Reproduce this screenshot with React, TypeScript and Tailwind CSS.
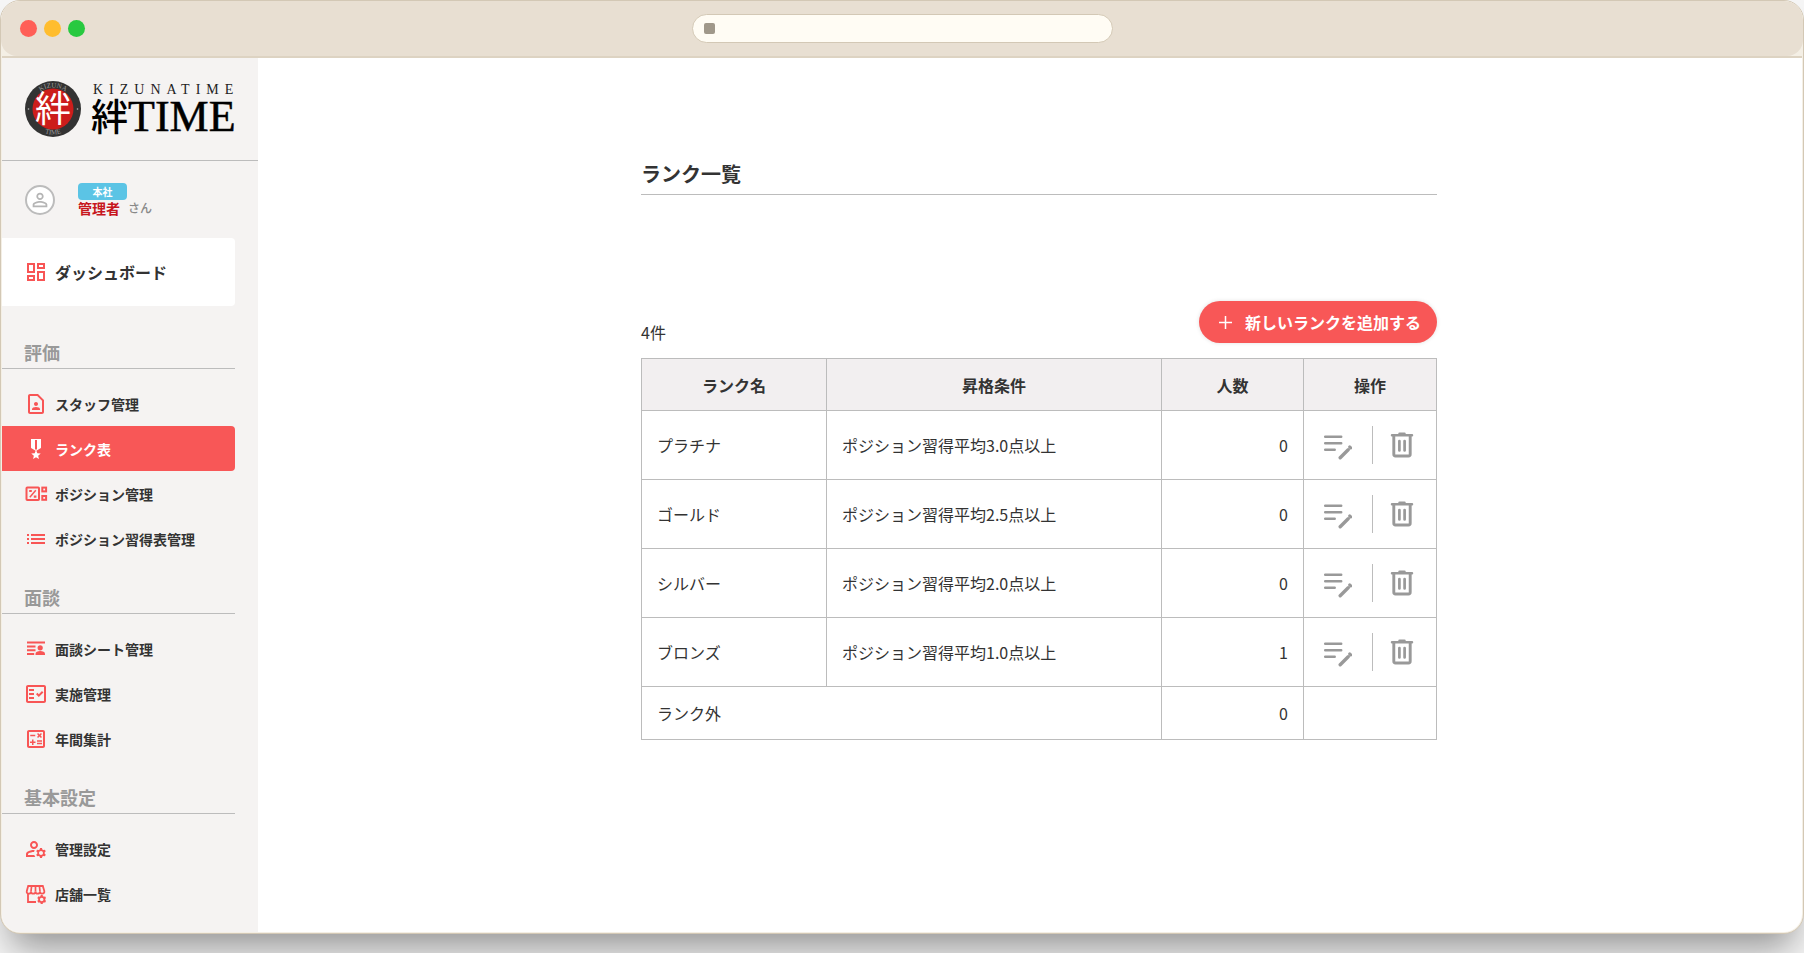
import type { ReactNode } from "react";
import {
  MdList,
  MdMilitaryTech,
  MdOutlineCalculate,
  MdOutlineContactPage,
  MdOutlineDashboard,
  MdOutlineFactCheck,
  MdOutlineManageAccounts,
  MdPersonOutline,
} from "react-icons/md";

type NavItem = { label: string; icon: ReactNode; active?: boolean };
type NavSection = { title: string; items: NavItem[] };
type Rank = { name: string; condition: string; count: number };

function PositionIcon() {
  return (
    <svg width="24" height="24" viewBox="0 0 24 24" fill="none" stroke="currentColor" strokeWidth="2">
      <rect x="2.5" y="5.5" width="12.5" height="12.5" rx="0.8" />
      <rect x="18.3" y="5.6" width="3.8" height="3.8" />
      <rect x="18.3" y="14" width="3.8" height="3.8" />
      <path d="M5.8 15.300l6-7" strokeWidth="1.5" />
      <path d="M5.2 9h2.600M9.800 14.600h2.600" strokeWidth="2.200" />
    </svg>
  );
}

function SheetIcon() {
  return (
    <svg width="24" height="24" viewBox="0 0 24 24" fill="currentColor">
      <path d="M3 4.500h18v2H3zM3 8.500h8.500v2H3zM3 12.300h8.500v2H3zM3 16h7.200v2H3z" />
      <circle cx="16.200" cy="10.800" r="2.600" />
      <path d="M11.500 18v-1.200c0-1.700 2.200-2.700 4.700-2.700s4.800 1 4.800 2.700V18z" />
    </svg>
  );
}

function StoreIcon() {
  return (
    <svg width="24" height="24" viewBox="0 0 24 24" fill="none" stroke="currentColor" strokeWidth="1.8">
      <path d="M4.200 4h14.600l1.500 5c.4 1.500-.6 2.700-2 2.700-1.300 0-2.300-1-2.300-2.200 0 1.300-1 2.200-2.300 2.200s-2.200-1-2.200-2.200c0 1.300-1 2.200-2.300 2.200S7 10.700 7 9.500c0 1.300-1 2.200-2.200 2.200-1.500 0-2.400-1.200-2-2.700z" />
      <path d="M11.500 4v5.500M7.600 4L7 9.500M15.400 4l.6 5.500" strokeWidth="1.700" />
      <path d="M4 11.500V20h8" />
      <circle cx="17.700" cy="17.500" r="2.700" strokeWidth="1.800" />
      <path
        d="M17.700 13v1.800M17.700 20.200V22M13.800 15.250l1.560.9M20.040 18.850l1.560.9M21.600 15.250l-1.560.9M15.360 18.850l-1.560.9"
        strokeWidth="2.200"
      />
    </svg>
  );
}

function EditIcon() {
  return (
    <svg width="30" height="30" viewBox="-1 -4 30 30" fill="none" stroke="currentColor" strokeLinecap="round">
      <path d="M2.200 2.700h16M2.200 9.200h16M2.200 15.700h9.500" strokeWidth="2.500" />
      <path d="M17.200 23.800l8-8" strokeWidth="3.400" />
      <path d="M26.700 12.900l1 1" strokeWidth="3" />
    </svg>
  );
}

function TrashIcon() {
  return (
    <svg width="24" height="28" viewBox="0 0 24 28" fill="none" stroke="currentColor" strokeLinecap="round">
      <path d="M2 4.200h20M9.500 2.700h5" strokeWidth="2.500" />
      <path d="M3.800 5v18.300c0 1 .7 1.700 1.700 1.700h13c1 0 1.700-.7 1.700-1.700V5" strokeWidth="2.900" />
      <path d="M9.400 10v9.500M14.600 10v9.500" strokeWidth="2.700" />
    </svg>
  );
}

function Logo() {
  return (
    <svg
      width="224"
      height="60"
      viewBox="0 0 224 60"
      role="img"
      aria-label="絆TIME"
      className="font-['Liberation_Serif','Noto_Sans_CJK_JP',serif]"
    >
      <defs>
        <path id="sealTop" d="M8.500 30a21.500 21.500 0 0 1 43 0" />
        <path id="sealBottom" d="M4.500 30a25.500 25.500 0 0 0 51 0" />
      </defs>
      <circle cx="30" cy="30" r="28" fill="#333" />
      <circle cx="30" cy="30" r="20.500" fill="#cc1d1b" />
      <circle cx="5.500" cy="30" r="0.800" fill="#bbb" />
      <circle cx="54.500" cy="30" r="0.800" fill="#bbb" />
      <text fontSize="7" fill="#999" textAnchor="middle">
        <textPath href="#sealTop" startOffset="50%">KIZUNA</textPath>
      </text>
      <text fontSize="7" fill="#999" textAnchor="middle">
        <textPath href="#sealBottom" startOffset="50%">TIME</textPath>
      </text>
      <text x="30" y="43" fontSize="36" fill="#fff" textAnchor="middle">絆</text>
      <text x="70" y="15" fontSize="14" fill="#222" className="tracking-[6px]">KIZUNATIME</text>
      <text x="68" y="52" fontSize="37" fontWeight="500" fill="#000">絆</text>
      <text x="105" y="52" fontSize="44" fill="#000" stroke="#000" strokeWidth="0.5">TIME</text>
    </svg>
  );
}

const sections: NavSection[] = [
  {
    title: "評価",
    items: [
      { label: "スタッフ管理", icon: <MdOutlineContactPage size={24} /> },
      { label: "ランク表", icon: <MdMilitaryTech size={24} />, active: true },
      { label: "ポジション管理", icon: <PositionIcon /> },
      { label: "ポジション習得表管理", icon: <MdList size={24} /> },
    ],
  },
  {
    title: "面談",
    items: [
      { label: "面談シート管理", icon: <SheetIcon /> },
      { label: "実施管理", icon: <MdOutlineFactCheck size={24} /> },
      { label: "年間集計", icon: <MdOutlineCalculate size={24} /> },
    ],
  },
  {
    title: "基本設定",
    items: [
      { label: "管理設定", icon: <MdOutlineManageAccounts size={24} /> },
      { label: "店舗一覧", icon: <StoreIcon /> },
    ],
  },
];

const ranks: Rank[] = [
  { name: "プラチナ", condition: "ポジション習得平均3.0点以上", count: 0 },
  { name: "ゴールド", condition: "ポジション習得平均2.5点以上", count: 0 },
  { name: "シルバー", condition: "ポジション習得平均2.0点以上", count: 0 },
  { name: "ブロンズ", condition: "ポジション習得平均1.0点以上", count: 1 },
];

function TitleBar() {
  return (
    <div className="bg-[#f4efe5]">
      <header className="flex h-[55px] items-center rounded-t-[18px] rounded-b-[16px] bg-[#e8dfd2] px-[19px]">
        <div className="flex flex-1 gap-[7px]">
          <span className="size-[17px] rounded-full bg-[#ff5f57]" />
          <span className="size-[17px] rounded-full bg-[#ffbd2e]" />
          <span className="size-[17px] rounded-full bg-[#28c940]" />
        </div>
        <div className="flex h-[29px] w-[421px] items-center gap-2 rounded-full border border-[#d3c8b5] bg-[#fffcf4] px-[11px]">
          <span className="size-[11px] rounded-[2px] bg-[#a0988a]" />
          <input type="text" aria-label="アドレス" className="min-w-0 flex-1 bg-transparent text-sm outline-none" />
        </div>
        <div className="flex-1" />
      </header>
    </div>
  );
}

function Sidebar() {
  return (
    <aside className="w-64 shrink-0 bg-[#f5f3f2] pb-[15px]">
      <div className="flex h-[103px] items-center border-b border-[#bcbcbc] pl-[21px]">
        <a href="#">
          <Logo />
        </a>
      </div>

      <div className="flex h-[77px] items-center gap-[23px] pl-[23px]">
        <span className="flex size-[30px] items-center justify-center rounded-full border-2 border-[#bcbcbc] bg-white text-[#b5b5b5]">
          <MdPersonOutline size={22} />
        </span>
        <div>
          <span className="flex h-[17px] w-[49px] items-center justify-center rounded bg-[#5bc4e5] text-[10px] font-bold text-white">
            本社
          </span>
          <p className="flex items-center gap-2 text-sm leading-4 font-bold text-[#c7161d]">
            管理者
            <span className="text-xs leading-4 font-medium text-[#888]">さん</span>
          </p>
        </div>
      </div>

      <nav className="pr-[23px]">
        <a
          href="#"
          className="mb-[10px] flex h-[68px] items-center gap-[7px] rounded-r bg-white pl-[22px] text-base font-bold text-[#333]"
        >
          <MdOutlineDashboard size={24} className="text-[#f85555]" />
          ダッシュボード
        </a>
        {sections.map((section) => (
          <section key={section.title}>
            <h2 className="border-b border-[#bcbcbc] pt-[23px] pb-[3px] pl-[22px] text-lg leading-[26px] font-bold text-[#999]">
              {section.title}
            </h2>
            <ul className="pt-3">
              {section.items.map((item) => (
                <li key={item.label}>
                  <a
                    href="#"
                    className={
                      item.active
                        ? "flex h-[45px] items-center gap-[7px] rounded-r bg-[#f85757] pl-[22px] text-sm font-bold text-white"
                        : "flex h-[45px] items-center gap-[7px] pl-[22px] text-sm font-bold text-[#333]"
                    }
                  >
                    <span className={item.active ? "text-white" : "text-[#f85555]"}>{item.icon}</span>
                    {item.label}
                  </a>
                </li>
              ))}
            </ul>
          </section>
        ))}
      </nav>
    </aside>
  );
}

function RankTable() {
  return (
    <table className="w-full table-fixed border-collapse text-base text-[#333] [&_td]:border [&_td]:border-[#bcbcbc] [&_td]:px-[15px] [&_th]:border [&_th]:border-[#bcbcbc]">
      <colgroup>
        <col className="w-[185px]" />
        <col />
        <col className="w-[142px]" />
        <col className="w-[133px]" />
      </colgroup>
      <thead>
        <tr className="h-[52px] bg-[#f2eff0] font-bold">
          <th>ランク名</th>
          <th>昇格条件</th>
          <th>人数</th>
          <th>操作</th>
        </tr>
      </thead>
      <tbody>
        {ranks.map((rank) => (
          <tr key={rank.name} className="h-[69px]">
            <td>{rank.name}</td>
            <td>{rank.condition}</td>
            <td className="text-right">{rank.count}</td>
            <td>
              <div className="-mx-4 flex items-center justify-center pr-1 text-[#999]">
                <button type="button" aria-label={`${rank.name}を編集`} className="mr-5">
                  <EditIcon />
                </button>
                <span className="h-[38px] w-px bg-[#bcbcbc]" />
                <button type="button" aria-label={`${rank.name}を削除`} className="ml-[17px]">
                  <TrashIcon />
                </button>
              </div>
            </td>
          </tr>
        ))}
        <tr className="h-[53px]">
          <td colSpan={2}>ランク外</td>
          <td className="text-right">0</td>
          <td />
        </tr>
      </tbody>
    </table>
  );
}

export default function App() {
  return (
    <div className="flex min-h-screen flex-col overflow-hidden bg-[#f6f6f6] pb-[19px] font-['Noto_Sans_CJK_JP',sans-serif]">
      <div className="flex flex-1 flex-col rounded-[20px] border border-[#d3c8b5] bg-[#f4efe5] shadow-[0_24px_36px_-10px_rgba(0,0,0,0.4)]">
        <div className="overflow-hidden rounded-t-[19px]">
          <TitleBar />
        </div>
        <div className="mx-px mb-px flex flex-1 overflow-hidden rounded-b-[18px] border-t-2 border-[#ddd3c2] bg-white">
          <Sidebar />
          <main className="flex-1 pt-[102px] pl-[18px]">
            <div className="mx-auto w-full max-w-[796px]">
              <h1 className="border-b border-[#bcbcbc] pb-[6px] text-xl leading-7 font-bold text-[#333]">ランク一覧</h1>
              <div className="mt-[106px] mb-[15px] flex items-end justify-between">
                <p className="text-base leading-[22px] text-[#333]">4件</p>
                <button
                  type="button"
                  className="flex h-[42px] items-center gap-[13px] rounded-full bg-[#f85757] pr-4 pl-5 text-base font-bold text-white shadow-[0_0_4px_rgba(0,0,0,0.12)]"
                >
                  <svg width="13" height="13" viewBox="0 0 13 13" stroke="currentColor" strokeWidth="1.500">
                    <path d="M6.500 0v13M0 6.500h13" />
                  </svg>
                  新しいランクを追加する
                </button>
              </div>
              <RankTable />
            </div>
          </main>
        </div>
      </div>
    </div>
  );
}
